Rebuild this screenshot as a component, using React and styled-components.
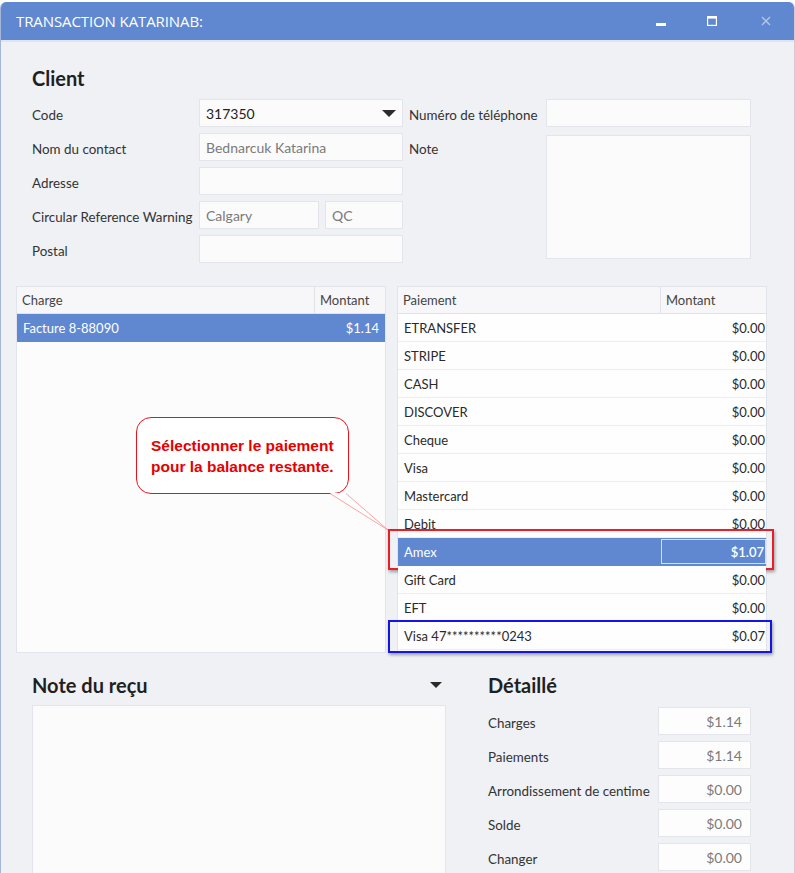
import React from "react";
import styled, { createGlobalStyle } from "styled-components";

const GlobalStyle = createGlobalStyle`
  html, body {
    margin: 0;
    padding: 0;
    background: #ffffff;
  }
  body {
    font-family: "Segoe UI", Lato, "Noto Sans", sans-serif;
    font-size: 13px;
    color: #333;
  }
`;

const payments = [
  { name: "ETRANSFER", amount: "$0.00" },
  { name: "STRIPE", amount: "$0.00" },
  { name: "CASH", amount: "$0.00" },
  { name: "DISCOVER", amount: "$0.00" },
  { name: "Cheque", amount: "$0.00" },
  { name: "Visa", amount: "$0.00" },
  { name: "Mastercard", amount: "$0.00" },
  { name: "Debit", amount: "$0.00" },
  { name: "Amex", amount: "$1.07", selected: true, mark: "red" },
  { name: "Gift Card", amount: "$0.00" },
  { name: "EFT", amount: "$0.00" },
  { name: "Visa 47**********0243", amount: "$0.07", mark: "blue" },
];

const details = [
  { label: "Charges", value: "$1.14" },
  { label: "Paiements", value: "$1.14" },
  { label: "Arrondissement de centime", value: "$0.00" },
  { label: "Solde", value: "$0.00" },
  { label: "Changer", value: "$0.00" },
];

const Caret = ({ size = 14 }) => (
  <svg width={size} height={size / 2} viewBox="0 0 14 7">
    <path d="M0 0 L14 0 L7 7 Z" fill="#2b2b2b" />
  </svg>
);

const App = () => {
  return (
    <>
      <GlobalStyle />
      <Window>
        <TitleBar>
          <Title>TRANSACTION KATARINAB:</Title>
          <WinButtons>
            <WinButton>
              <svg width="10" height="10" viewBox="0 0 10 10">
                <rect x="0" y="7" width="10" height="3" fill="#fff" />
              </svg>
            </WinButton>
            <WinButton>
              <svg width="10" height="10" viewBox="0 0 10 10">
                <rect x="0.6" y="0.6" width="8.8" height="8.8" fill="none" stroke="#fff" strokeWidth="1.2" />
                <rect x="0" y="0" width="10" height="2.6" fill="#fff" />
              </svg>
            </WinButton>
            <WinButton close>
              <svg width="10" height="10" viewBox="0 0 10 10">
                <path d="M1 1 L9 9 M9 1 L1 9" stroke="#b6c5e4" strokeWidth="1.4" />
              </svg>
            </WinButton>
          </WinButtons>
        </TitleBar>

        <Body>
          <ClientSection>
            <Heading>Client</Heading>
            <FormColumns>
              <FormGrid>
                <Label>Code</Label>
                <Input>
                  <span>317350</span>
                  <Caret />
                </Input>
                <Label>Nom du contact</Label>
                <Input readOnly>Bednarcuk Katarina</Input>
                <Label>Adresse</Label>
                <Input />
                <Label>Circular Reference Warning</Label>
                <SplitInputs>
                  <Input readOnly>Calgary</Input>
                  <Input readOnly>QC</Input>
                </SplitInputs>
                <Label>Postal</Label>
                <Input />
              </FormGrid>
              <SideGrid>
                <Label>Numéro de téléphone</Label>
                <Input />
                <NoteLabel>Note</NoteLabel>
                <NoteBox />
              </SideGrid>
            </FormColumns>
          </ClientSection>

          <GridsRow>
            <DataGrid>
              <HeaderRow cols="1fr 71px">
                <HeaderCell>Charge</HeaderCell>
                <HeaderCell>Montant</HeaderCell>
              </HeaderRow>
              <Row cols="1fr 71px" selected>
                <Cell>Facture 8-88090</Cell>
                <Cell align="right" pad="6px">$1.14</Cell>
              </Row>
            </DataGrid>

            <DataGrid>
              <HeaderRow cols="1fr 106px">
                <HeaderCell>Paiement</HeaderCell>
                <HeaderCell>Montant</HeaderCell>
              </HeaderRow>
              {payments.map((p) => (
                <Row key={p.name} cols="1fr 106px" selected={p.selected} mark={p.mark}>
                  <Cell>{p.name}</Cell>
                  <Cell align="right" pad="1px" editing={p.selected}>
                    {p.amount}
                  </Cell>
                </Row>
              ))}
            </DataGrid>

            <Callout>
              Sélectionner le paiement
              <br />
              pour la balance restante.
            </Callout>
            <CalloutTail width="64" height="40" viewBox="0 0 64 40">
              <path d="M1 0 L17 0 L59 37" fill="#ffffff" stroke="none" />
              <path d="M1 0.5 L59 37 M17 0.5 L59 37" stroke="#ff8a8a" strokeWidth="0.8" fill="none" />
            </CalloutTail>
          </GridsRow>

          <BottomRow>
            <NoteColumn>
              <NoteHeader>
                <Heading>Note du reçu</Heading>
                <Caret size={12} />
              </NoteHeader>
              <ReceiptBox />
            </NoteColumn>
            <DetailColumn>
              <Heading>Détaillé</Heading>
              <DetailGrid>
                {details.map((d) => (
                  <React.Fragment key={d.label}>
                    <Label>{d.label}</Label>
                    <ValueBox>{d.value}</ValueBox>
                  </React.Fragment>
                ))}
              </DetailGrid>
            </DetailColumn>
          </BottomRow>
        </Body>
      </Window>
    </>
  );
};

export default App;

const Window = styled.div`
  width: 793px;
  height: 871px;
  margin-top: 2px;
  background: #eff1f5;
  border-left: 1px solid #a6b6d6;
  border-right: 1px solid #c9cfda;
  border-radius: 6px 6px 0 0;
  overflow: hidden;
  display: flex;
  flex-direction: column;
`;

const TitleBar = styled.div`
  height: 38px;
  flex-shrink: 0;
  background: #5f88d0;
  border-bottom: 2px solid #dfe5f0;
  display: flex;
  align-items: center;
  justify-content: space-between;
  padding: 0 23px 0 15px;
`;

const Title = styled.div`
  color: #fff;
  font-family: "Open Sans", sans-serif;
  font-size: 15px;
  letter-spacing: -0.1px;
`;

const WinButtons = styled.div`
  display: flex;
  gap: 41px;
  align-items: center;
`;

const WinButton = styled.div`
  width: 10px;
  height: 10px;
  display: flex;
  align-items: center;
  justify-content: center;
  margin-left: ${(p) => (p.close ? "3px" : "0")};
`;

const Body = styled.div`
  flex: 1;
  display: flex;
  flex-direction: column;
`;

const ClientSection = styled.div`
  padding: 22px 16px 0 31px;
`;

const Heading = styled.div`
  font-family: "Segoe UI", Lato, "Noto Sans", sans-serif;
  font-size: 20px;
  font-weight: 700;
  color: #1f1f1f;
  line-height: 28px;
`;

const FormColumns = styled.div`
  display: flex;
  gap: 6px;
  margin-top: 7px;
`;

const FormGrid = styled.div`
  display: grid;
  grid-template-columns: 167px 204px;
  grid-auto-rows: 28px;
  row-gap: 6px;
  align-items: center;
`;

const SideGrid = styled.div`
  display: grid;
  grid-template-columns: 137px 205px;
  grid-template-rows: 28px 124px;
  row-gap: 8px;
`;

const Label = styled.div`
  color: #333;
  font-size: 13.4px;
  white-space: nowrap;
  align-self: center;
  padding-top: 3px;
`;

const NoteLabel = styled(Label)`
  align-self: start;
  padding-top: 6px;
`;

const Input = styled.div`
  height: 28px;
  box-sizing: border-box;
  background: #fbfbfc;
  border: 1px solid #e3e5ea;
  padding: 0 6px;
  display: flex;
  align-items: center;
  justify-content: space-between;
  font-size: 14px;
  color: ${(p) => (p.readOnly ? "#7a7a7a" : "#222")};
`;

const SplitInputs = styled.div`
  display: grid;
  grid-template-columns: 120px 78px;
  gap: 6px;
`;

const NoteBox = styled.div`
  background: #fbfbfc;
  border: 1px solid #e3e5ea;
  box-sizing: border-box;
  height: 124px;
`;

const GridsRow = styled.div`
  position: relative;
  display: flex;
  gap: 11px;
  padding: 0 15px;
  margin-top: 23px;
`;

const DataGrid = styled.div`
  width: 370px;
  height: 367px;
  box-sizing: border-box;
  background: #fcfcfd;
  border: 1px solid #e1e4ea;
`;

const HeaderRow = styled.div`
  display: grid;
  grid-template-columns: ${(p) => p.cols};
  height: 26px;
  background: #f7f7f9;
  border-bottom: 1px solid #dfe2e8;
`;

const HeaderCell = styled.div`
  display: flex;
  align-items: center;
  padding-left: 5px;
  font-size: 13px;
  color: #444;
  & + & {
    border-left: 1px solid #dfe2e8;
  }
`;

const Row = styled.div`
  position: relative;
  display: grid;
  grid-template-columns: ${(p) => p.cols};
  height: 28px;
  box-sizing: border-box;
  border-bottom: 1px solid ${(p) => (p.selected ? "#5f88d0" : "#eceef2")};
  background: ${(p) => (p.selected ? "#5f88d0" : "#fefefe")};
  color: ${(p) => (p.selected ? "#fff" : "#2a2a2a")};

  &::after {
    content: "";
    display: ${(p) => (p.mark ? "block" : "none")};
    position: absolute;
    pointer-events: none;
    border: 2px solid ${(p) => (p.mark === "red" ? "#ee1c25" : "#1414e6")};
    box-shadow: 1px 2px 3px rgba(0, 0, 0, 0.35);
    left: -10px;
    right: ${(p) => (p.mark === "red" ? "-8px" : "-6px")};
    top: ${(p) => (p.mark === "red" ? "-9px" : "-2px")};
    bottom: ${(p) => (p.mark === "red" ? "-5px" : "-4px")};
  }
`;

const Cell = styled.div`
  display: flex;
  align-items: center;
  justify-content: ${(p) => (p.align === "right" ? "flex-end" : "flex-start")};
  padding: ${(p) => (p.align === "right" ? `0 ${p.pad} 0 0` : "0 0 0 6px")};
  font-size: 13px;
  box-sizing: border-box;
  ${(p) => p.editing && "border: 1px solid #d3def3; margin: 1px 0 1px 1px; font-weight: 600;"}
`;

const Callout = styled.div`
  position: absolute;
  left: 135px;
  top: 131px;
  width: 213px;
  height: 77px;
  box-sizing: border-box;
  background: #fff;
  border: 1px solid #e8141c;
  border-radius: 15px;
  padding: 17px 0 0 14px;
  font-family: "Liberation Sans", Arial, sans-serif;
  font-weight: 700;
  font-size: 15.5px;
  line-height: 21px;
  color: #e60000;
  white-space: nowrap;
`;

const CalloutTail = styled.svg`
  position: absolute;
  left: 328px;
  top: 207px;
  overflow: visible;
`;

const BottomRow = styled.div`
  display: flex;
  gap: 42px;
  padding: 18px 0 0 31px;
  flex: 1;
  min-height: 0;
`;

const NoteColumn = styled.div`
  width: 414px;
  display: flex;
  flex-direction: column;
`;

const NoteHeader = styled.div`
  display: flex;
  align-items: center;
  justify-content: space-between;
  padding-right: 4px;
  margin-bottom: 6px;
`;

const ReceiptBox = styled.div`
  flex: 1;
  background: #fbfbfc;
  border: 1px solid #e3e5ea;
  border-bottom: none;
`;

const DetailColumn = styled.div`
  display: flex;
  flex-direction: column;
`;

const DetailGrid = styled.div`
  display: grid;
  grid-template-columns: 170px 93px;
  grid-auto-rows: 28px;
  row-gap: 6px;
  margin-top: 8px;
`;

const ValueBox = styled.div`
  box-sizing: border-box;
  background: #fdfdfd;
  border: 1px solid #e3e5ea;
  display: flex;
  align-items: center;
  justify-content: flex-end;
  padding-right: 8px;
  font-size: 14px;
  color: #7a7a7a;
`;
